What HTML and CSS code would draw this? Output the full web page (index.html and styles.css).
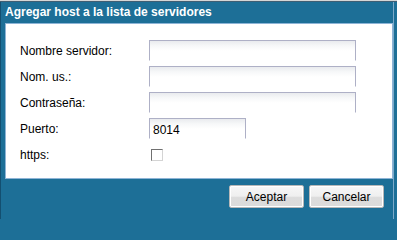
FILE: index.html
```html
<!DOCTYPE html>
<html lang="es">
<head>
<meta charset="utf-8">
<title>Agregar host</title>
<link rel="stylesheet" href="styles.css">
</head>
<body>
<div class="topstrip"></div>
<div class="dialog">
  <div class="title">Agregar host a la lista de servidores</div>
  <div class="panel">
    <div class="form">
      <label class="lbl">Nombre servidor:</label>
      <div class="field wide"></div>
      <label class="lbl">Nom. us.:</label>
      <div class="field wide"></div>
      <label class="lbl">Contraseña:</label>
      <div class="field wide"></div>
      <label class="lbl">Puerto:</label>
      <div class="field short">8014</div>
      <label class="lbl">https:</label>
      <div class="checkcell"><span class="check"></span></div>
    </div>
  </div>
  <div class="footer">
    <button class="btn">Aceptar</button>
    <button class="btn">Cancelar</button>
  </div>
</div>
</body>
</html>
```
FILE: styles.css
```css
html, body {
  margin: 0;
  padding: 0;
}
html {
  background: #1d6f97;
}
body {
  background: #1d6f97;
  font-family: "Liberation Sans", Arial, sans-serif;
  font-size: 12px;
  color: #000;
  min-height: 219px;
}
.topstrip {
  height: 1px;
  background: #d6d6d6;
  border-bottom: 1px solid #3f5f74;
}
.dialog {
  width: 392px;
  min-height: 217px;
  border-left: 1px solid #134f70;
  border-right: 1px solid #7eaac9;
}
.title {
  height: 21px;
  line-height: 21px;
  padding-left: 4px;
  color: #fff;
  font-weight: bold;
  font-size: 12px;
  white-space: nowrap;
}
.panel {
  margin-left: 4px;
  width: 388px;
  height: 156px;
  box-sizing: border-box;
  background: #fff;
  border: 1px solid #8db4d6;
  padding: 16px 0 0 14px;
}
.form {
  display: grid;
  grid-template-columns: 129px 1fr;
  grid-auto-rows: 21px;
  row-gap: 5px;
}
.lbl {
  display: flex;
  align-items: center;
  padding-top: 1px;
  white-space: nowrap;
}
.field {
  box-sizing: border-box;
  height: 21px;
  border: 1px solid #aeb0c6;
  border-bottom-color: #fff;
  background: linear-gradient(#e9ebee 0, #f7f8f9 5px, #fff 10px);
  padding: 4px 0 0 3px;
  font-size: 12px;
  line-height: 15px;
}
.wide {
  width: 207px;
}
.short {
  width: 97px;
}
.checkcell {
  display: flex;
  align-items: center;
  padding-left: 2px;
}
.check {
  display: block;
  width: 12px;
  height: 12px;
  box-sizing: border-box;
  border: 1px solid #d4d4d4;
  border-top-color: #707070;
  border-left-color: #707070;
  background: #fff;
}
.footer {
  display: flex;
  justify-content: flex-end;
  gap: 5px;
  padding: 6px 9px 0 0;
}
.btn {
  width: 75px;
  height: 23px;
  box-sizing: border-box;
  border: 1px solid #b8b8b8;
  border-radius: 2px;
  box-shadow: inset 0 0 0 1px #fff;
  background: linear-gradient(#f7f7f7 0, #efefef 48%, #dcdcdc 55%, #dbdbdb 100%);
  font-family: "Liberation Sans", Arial, sans-serif;
  font-size: 12px;
  color: #000;
  padding: 0;
  margin: 0;
}
```
